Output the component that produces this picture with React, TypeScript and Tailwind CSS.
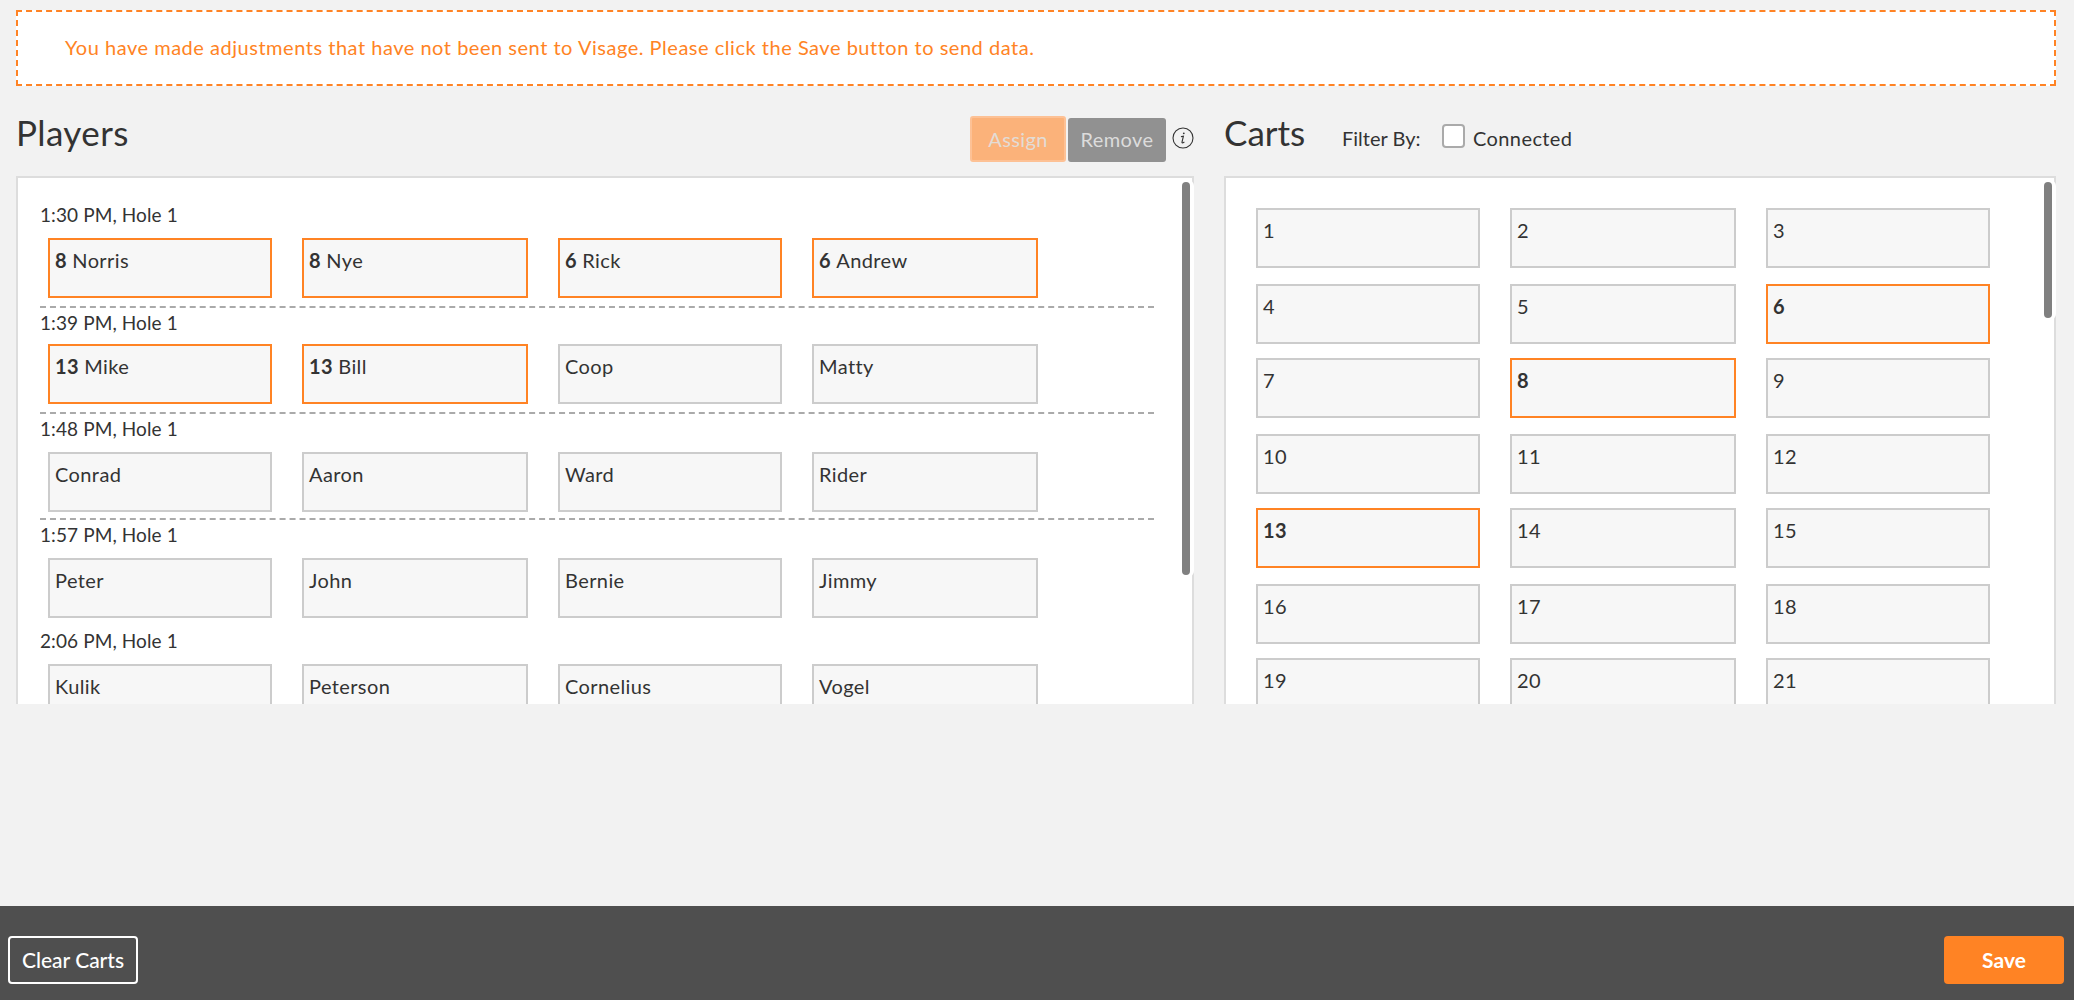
import React from 'react';

const font = { fontFamily: 'Lato, "Noto Sans", sans-serif' };

interface Slot {
  cart?: number;
  name?: string;
}

interface TeeGroup {
  label: string;
  labelClass: string;
  lineClass?: string;
  slots: Slot[];
}

const groups: TeeGroup[] = [
  {
    label: '1:30 PM, Hole 1',
    labelClass: 'mt-[25px] mb-[11px]',
    lineClass: 'mt-[8px]',
    slots: [
      { cart: 8, name: 'Norris' },
      { cart: 8, name: 'Nye' },
      { cart: 6, name: 'Rick' },
      { cart: 6, name: 'Andrew' },
    ],
  },
  {
    label: '1:39 PM, Hole 1',
    labelClass: 'mt-[3px] mb-[9px]',
    lineClass: 'mt-[8px]',
    slots: [{ cart: 13, name: 'Mike' }, { cart: 13, name: 'Bill' }, { name: 'Coop' }, { name: 'Matty' }],
  },
  {
    label: '1:48 PM, Hole 1',
    labelClass: 'mt-[3px] mb-[11px]',
    lineClass: 'mt-[6px]',
    slots: [{ name: 'Conrad' }, { name: 'Aaron' }, { name: 'Ward' }, { name: 'Rider' }],
  },
  {
    label: '1:57 PM, Hole 1',
    labelClass: 'mt-[3px] mb-[11px]',
    slots: [{ name: 'Peter' }, { name: 'John' }, { name: 'Bernie' }, { name: 'Jimmy' }],
  },
  {
    label: '2:06 PM, Hole 1',
    labelClass: 'mt-[11px] mb-[11px]',
    slots: [{ name: 'Kulik' }, { name: 'Peterson' }, { name: 'Cornelius' }, { name: 'Vogel' }],
  },
];

// rows alternate 76 / 74 in the reference
const cartRows = [
  { gap: '', carts: [1, 2, 3] },
  { gap: 'mt-[16px]', carts: [4, 5, 6] },
  { gap: 'mt-[14px]', carts: [7, 8, 9] },
  { gap: 'mt-[16px]', carts: [10, 11, 12] },
  { gap: 'mt-[14px]', carts: [13, 14, 15] },
  { gap: 'mt-[16px]', carts: [16, 17, 18] },
  { gap: 'mt-[14px]', carts: [19, 20, 21] },
];

const assignedCarts = [6, 8, 13];

const Tile: React.FC<{ active: boolean; children: React.ReactNode }> = ({ active, children }) => (
  <div
    className={`h-[60px] border-2 bg-[#f7f7f7] pl-[5px] pt-[8px] text-[20px] leading-[24px] tracking-[0.4px] text-[#333333] ${
      active ? 'border-[#ff8324]' : 'border-[#cccccc]'
    }`}
  >
    {children}
  </div>
);

const Scrollbar: React.FC<{ heightClass: string }> = ({ heightClass }) => (
  <div className="absolute right-[-2px] top-[2px] w-[12px] rounded-full bg-white py-[2px]">
    <div className={`w-[8px] rounded-full bg-[#808080] ${heightClass}`} />
  </div>
);

const InfoIcon = () => (
  <svg width="22" height="22" viewBox="0 0 22 22" fill="none" stroke="#333333" strokeWidth="1.1">
    <circle cx="11" cy="11" r="10" />
    <circle cx="11.8" cy="6.3" r="0.9" fill="#333333" stroke="none" />
    <path d="M9.4 9.6 L11.4 9.2 L10 15.2 C9.9 16 10.5 16.2 12 15.2" strokeLinecap="round" />
  </svg>
);

export default function App() {
  return (
    <div className="flex h-screen flex-col overflow-hidden bg-[#f2f2f2]" style={font}>
      <div className="ml-[16px] mr-[18px] mt-[10px] flex h-[76px] items-center border-2 border-dashed border-[#ff8324] bg-white pb-[2px] pl-[47px] text-[20px] tracking-[0.52px] text-[#ff8324]">
        You have made adjustments that have not been sent to Visage. Please click the Save button to send data.
      </div>

      <div className="ml-[16px] mr-[18px] flex flex-1 gap-[30px]">
        {/* Players */}
        <div className="w-[1178px]">
          <div className="flex h-[90px] items-start justify-between pt-[30px]">
            <h1 className="text-[35px] leading-[32px] tracking-[0.4px] text-[#333333]">Players</h1>
            <div className="flex items-start">
              <button className="h-[46px] w-[96px] rounded-[3px] border-2 border-[#fdc195] bg-[#fbb27a] text-[20px] tracking-[0.4px] text-[#e3dcd5]">
                Assign
              </button>
              <button className="ml-[2px] mt-[2px] h-[44px] w-[98px] rounded-[3px] bg-[#919191] pb-[2px] text-[20px] tracking-[0.4px] text-[#dcdcdc]">
                Remove
              </button>
              <div className="ml-[6px] mt-[11px]">
                <InfoIcon />
              </div>
            </div>
          </div>
          <div className="relative h-[528px] border-x-2 border-t-2 border-[#dddddd] bg-white">
            <div className="h-full overflow-hidden pl-[22px] pr-[38px]">
              {groups.map((group) => (
                <div key={group.label}>
                  <div className={`h-[24px] text-[19px] leading-[24px] tracking-[0.1px] text-[#333333] ${group.labelClass}`}>
                    {group.label}
                  </div>
                  <div className="ml-[8px] grid grid-cols-[224px_226px_224px_226px] gap-x-[30px]">
                    {group.slots.map((slot, i) => (
                      <Tile key={i} active={slot.cart !== undefined}>
                        {slot.cart !== undefined && <b className="font-bold">{slot.cart} </b>}
                        {slot.name}
                      </Tile>
                    ))}
                  </div>
                  {group.lineClass && <div className={`border-t-2 border-dashed border-[#aaaaaa] ${group.lineClass}`} />}
                </div>
              ))}
            </div>
            <Scrollbar heightClass="h-[393px]" />
          </div>
        </div>

        {/* Carts */}
        <div className="flex-1">
          <div className="flex h-[90px] items-start pt-[30px]">
            <h1 className="w-[118px] text-[35px] leading-[32px] text-[#333333]">Carts</h1>
            <span className="mt-[10px] w-[100px] text-[20px] leading-[24px] text-[#333333]">Filter By:</span>
            <span className="mt-[8px] h-[24px] w-[23px] rounded-[4px] border-2 border-[#aaaaaa] bg-white" />
            <span className="ml-[8px] mt-[10px] text-[20px] leading-[24px] tracking-[0.4px] text-[#333333]">Connected</span>
          </div>
          <div className="relative h-[528px] border-x-2 border-t-2 border-[#dddddd] bg-white">
            <div className="h-full overflow-hidden pl-[30px] pt-[30px]">
              {cartRows.map((row) => (
                <div key={row.carts[0]} className={`grid grid-cols-[224px_226px_224px] gap-x-[30px] ${row.gap}`}>
                  {row.carts.map((cart) => {
                    const active = assignedCarts.includes(cart);
                    return (
                      <Tile key={cart} active={active}>
                        {active ? <b className="font-bold">{cart}</b> : cart}
                      </Tile>
                    );
                  })}
                </div>
              ))}
            </div>
            <Scrollbar heightClass="h-[136px]" />
          </div>
        </div>
      </div>

      <div className="flex h-[94px] items-start justify-between bg-[#4f4f4f] pl-[8px] pr-[10px] pt-[30px]">
        <button className="h-[48px] w-[130px] rounded-[4px] border-2 border-white text-[21px] font-medium text-white">
          Clear Carts
        </button>
        <button className="h-[48px] w-[120px] rounded-[4px] bg-[#ff8324] text-[21px] font-bold text-white">Save</button>
      </div>
    </div>
  );
}
